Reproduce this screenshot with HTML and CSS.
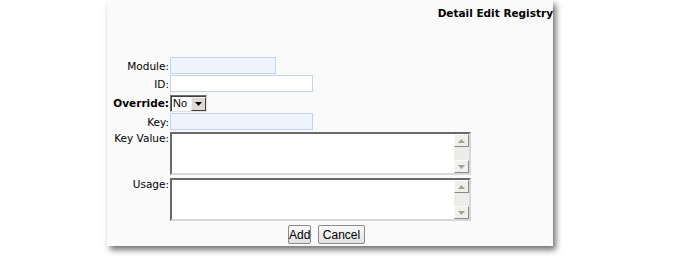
FILE: index.html
```html
<html>
  <head>
    <meta charset="UTF-8">
    <title>Detail Edit Registry</title>
    <link rel="stylesheet" href="styles.css">
  </head>
  <body>
    <div class="registry-panel">
      <div class="registry-title">Detail Edit Registry</div>

      <div class="registry-form">
        <label class="registry-label">Module:</label>
        <div><input class="registry-input registry-input-short registry-input-key" type="text"></div>

        <label class="registry-label">ID:</label>
        <div><input class="registry-input" type="text"></div>

        <label class="registry-label registry-label-bold">Override:</label>
        <div class="registry-select">
          <span class="registry-select-value">No</span>
          <span class="registry-select-arrow">
            <svg width="7" height="4" viewBox="0 0 7 4"><path d="M0 0h7L3.5 4z" fill="#000"/></svg>
          </span>
        </div>

        <label class="registry-label">Key:</label>
        <div><input class="registry-input registry-input-key" type="text"></div>

        <label class="registry-label registry-label-top">Key Value:</label>
        <div class="registry-area">
          <textarea></textarea>
          <div class="registry-scroll">
            <span class="registry-scroll-button">
              <svg width="7" height="4" viewBox="0 0 7 4"><path d="M0 4h7L3.5 0z" fill="#a0a0a0"/></svg>
            </span>
            <span class="registry-scroll-track"></span>
            <span class="registry-scroll-button">
              <svg width="7" height="4" viewBox="0 0 7 4"><path d="M0 0h7L3.5 4z" fill="#a0a0a0"/></svg>
            </span>
          </div>
        </div>

        <label class="registry-label registry-label-top">Usage:</label>
        <div class="registry-area">
          <textarea></textarea>
          <div class="registry-scroll">
            <span class="registry-scroll-button">
              <svg width="7" height="4" viewBox="0 0 7 4"><path d="M0 4h7L3.5 0z" fill="#a0a0a0"/></svg>
            </span>
            <span class="registry-scroll-track"></span>
            <span class="registry-scroll-button">
              <svg width="7" height="4" viewBox="0 0 7 4"><path d="M0 0h7L3.5 4z" fill="#a0a0a0"/></svg>
            </span>
          </div>
        </div>
      </div>

      <div class="registry-buttons">
        <button class="registry-button registry-button-add">Add</button>
        <button class="registry-button registry-button-cancel">Cancel</button>
      </div>
    </div>
  </body>
</html>
```

FILE: styles.css
```css
body {
  margin: 0;
  background-color: white;
  font-family: "DejaVu Sans", Verdana, sans-serif;
  font-size: 11px;
  color: #000;
}

.registry-panel {
  margin-left: 107px;
  width: 446px;
  height: 246px;
  background-color: #fafafa;
  box-shadow: 3px 4px 6px rgba(0, 0, 0, 0.55);
  display: flex;
  flex-direction: column;
}

.registry-title {
  text-align: right;
  font-weight: bold;
  font-size: 10.5px;
  padding-top: 7px;
  height: 14px;
}

.registry-form {
  margin-top: 36px;
  display: grid;
  grid-template-columns: 62px auto;
  column-gap: 1px;
  row-gap: 1px;
  align-items: center;
}

.registry-label {
  text-align: right;
  font-size: 10.5px;
}

.registry-label-bold {
  font-weight: bold;
}

.registry-label-top {
  align-self: start;
  padding-top: 1px;
}

.registry-input {
  display: block;
  box-sizing: border-box;
  width: 143px;
  height: 17px;
  border: 1px solid #c3d3ee;
  background-color: white;
  margin: 0;
  padding: 0;
}

.registry-input-short {
  width: 106px;
}

.registry-input-key {
  background-color: #eef5ff;
}

.registry-select {
  box-sizing: border-box;
  width: 37px;
  height: 17px;
  border: 1px solid;
  border-color: #707070 #e0e0e0 #e0e0e0 #707070;
  box-shadow: inset 1px 1px 0 #404040;
  background-color: white;
  display: flex;
  font-family: "Liberation Sans", Arial, sans-serif;
  font-size: 11px;
  margin-top: 2px;
}

.registry-select-value {
  flex: 1;
  padding-left: 2px;
  line-height: 15px;
}

.registry-select-arrow {
  box-sizing: border-box;
  width: 15px;
  height: 14px;
  margin-top: 1px;
  background-color: #dcdad2;
  border: 1px solid;
  border-color: #f4f4f4 #404040 #404040 #f4f4f4;
  display: flex;
  align-items: center;
  justify-content: center;
}

.registry-area {
  box-sizing: border-box;
  width: 301px;
  height: 43px;
  border: 2px solid;
  border-color: #6a6a6a #d8d8d8 #d8d8d8 #6a6a6a;
  display: flex;
  background-color: white;
  margin: 1px 0;
}

.registry-area textarea {
  flex: 1;
  border: none;
  resize: none;
  margin: 0;
  padding: 0;
  background-color: white;
  outline: none;
}

.registry-scroll {
  width: 15px;
  display: flex;
  flex-direction: column;
  background-color: #eaeae6;
}

.registry-scroll-button {
  box-sizing: border-box;
  height: 13px;
  background-color: #f0efea;
  border: 1px solid;
  border-color: #fafafa #8a8a8a #8a8a8a #fafafa;
  display: flex;
  align-items: center;
  justify-content: center;
}

.registry-scroll-track {
  flex: 1;
  background-image: linear-gradient(45deg, #f2f2ee 25%, transparent 25%, transparent 75%, #f2f2ee 75%);
  background-size: 2px 2px;
}

.registry-buttons {
  display: flex;
  justify-content: center;
  gap: 7px;
  margin-top: 3px;
  padding-right: 7px;
}

.registry-button {
  height: 19px;
  padding: 0;
  border: 1px solid #8a8a8a;
  border-radius: 2px;
  background: linear-gradient(#fafafa, #e2e2e2);
  font-family: "Liberation Sans", Arial, sans-serif;
  font-size: 12px;
  color: #000;
}

.registry-button-add {
  width: 23px;
}

.registry-button-cancel {
  width: 47px;
}
```
